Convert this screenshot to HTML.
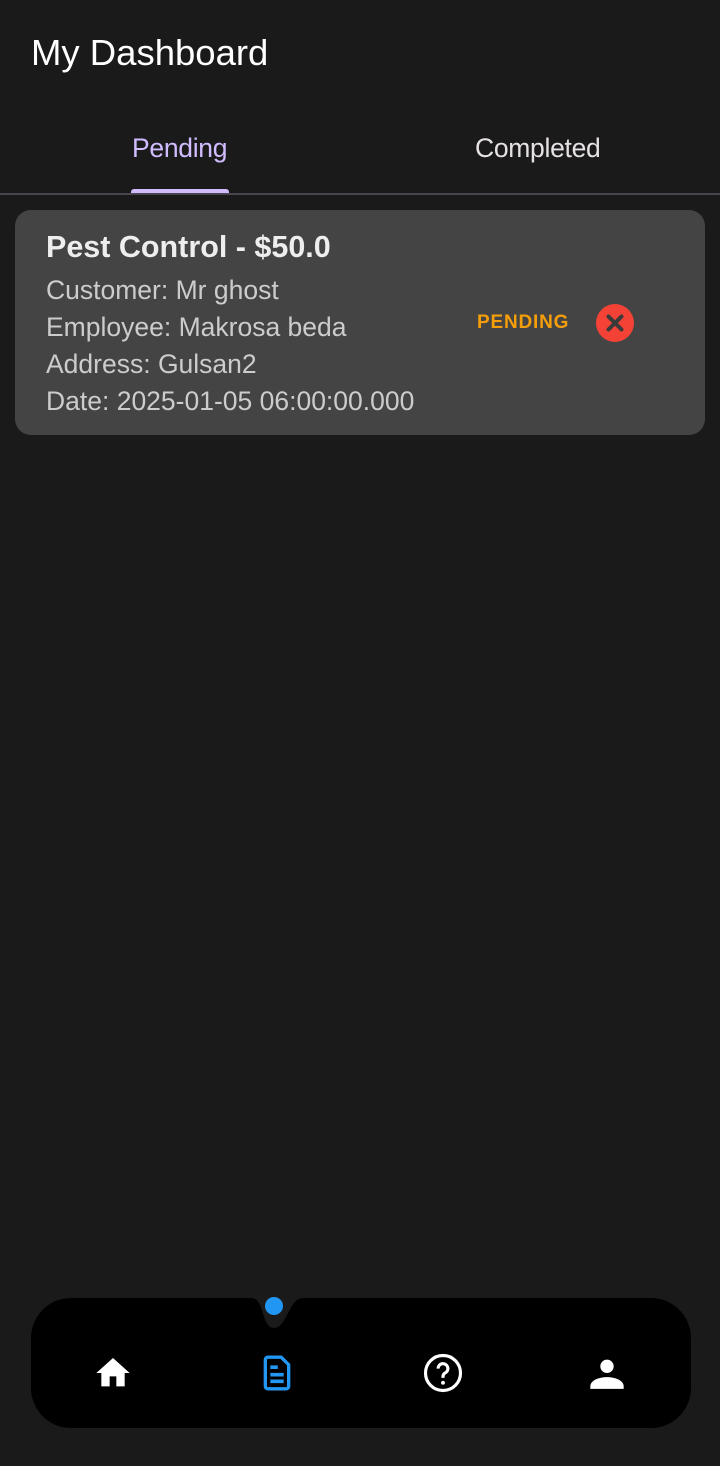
<!DOCTYPE html>
<html><head><meta charset="utf-8"><style>
html,body{margin:0;padding:0;}
body{width:720px;height:1466px;background:#1a1a1a;font-family:"Liberation Sans",sans-serif;position:relative;overflow:hidden;color:#fff;}
.t{position:absolute;white-space:nowrap;}
</style></head><body>
<div class="t" style="left:31px;top:32px;font-size:36.5px;color:#fff;">My Dashboard</div>
<div class="t" style="left:132px;top:133px;font-size:26.5px;color:#d0bcff;letter-spacing:-0.3px;">Pending</div>
<div class="t" style="left:475px;top:133px;font-size:26.5px;color:#e6e1e5;letter-spacing:-0.3px;">Completed</div>
<div style="position:absolute;left:131px;top:189px;width:98px;height:6px;background:#d0bcff;border-radius:3px 3px 0 0;"></div>
<div style="position:absolute;left:0;top:193px;width:720px;height:2px;background:#49454f;"></div>
<div style="position:absolute;left:15px;top:210px;width:690px;height:225px;background:#444444;border-radius:16px;"></div>
<div class="t" style="left:46px;top:230px;font-size:30.5px;font-weight:bold;color:#eee;">Pest Control - $50.0</div>
<div class="t" style="left:46px;top:272px;font-size:26.5px;color:#ccc;line-height:37px;">Customer: Mr ghost<br>Employee: Makrosa beda<br>Address: Gulsan2<br>Date: 2025-01-05 06:00:00.000</div>
<div class="t" style="left:477px;top:312px;font-size:19px;font-weight:bold;color:#f59e0b;letter-spacing:0.8px;">PENDING</div>
<svg style="position:absolute;left:596px;top:304px" width="38" height="38" viewBox="0 0 38 38"><circle cx="19" cy="19" r="19" fill="#f44336"/><path d="M12.5 12.5L25.5 25.5M25.5 12.5L12.5 25.5" stroke="#3a3a3a" stroke-width="4" stroke-linecap="round"/></svg>
<svg style="position:absolute;left:31px;top:1290px" width="660" height="140" viewBox="0 0 660 140">
<path d="M40 8 H220 C234 8 230 38 243 38 C256 38 258 8 272 8 H620 A40 40 0 0 1 660 48 V98 A40 40 0 0 1 620 138 H40 A40 40 0 0 1 0 98 V48 A40 40 0 0 1 40 8Z" fill="#000"/>
<circle cx="243" cy="16" r="9" fill="#2196f3"/>
</svg>
<svg style="position:absolute;left:92px;top:1353px" width="42" height="40" viewBox="0 0 24 24"><path d="M10 20v-6h4v6h5v-8h3L12 3 2 12h3v8z" fill="#fff"/></svg>
<svg style="position:absolute;left:257px;top:1353px" width="40" height="40" viewBox="0 0 24 24"><path d="M6.5 2.5h8l4.5 4.5V20a1.5 1.5 0 0 1-1.5 1.5h-11A1.5 1.5 0 0 1 5 20V4a1.5 1.5 0 0 1 1.5-1.5z" fill="none" stroke="#2196f3" stroke-width="2" stroke-linejoin="round"/><path d="M8 8.5h4.5M8 13h8M8 17h8" stroke="#2196f3" stroke-width="2.2"/></svg>
<svg style="position:absolute;left:422px;top:1352px" width="42" height="42" viewBox="0 0 24 24"><circle cx="12" cy="12" r="10" fill="none" stroke="#fff" stroke-width="1.8"/><path d="M9.2 9.5a2.8 2.8 0 1 1 4 2.5c-.9.5-1.2 1-1.2 2v.8" fill="none" stroke="#fff" stroke-width="1.8"/><circle cx="12" cy="17.6" r="1.1" fill="#fff"/></svg>
<svg style="position:absolute;left:587px;top:1353px" width="40" height="40" viewBox="0 0 24 24"><circle cx="12" cy="8" r="4" fill="#fff"/><path d="M2 20c0-3.5 5-5.5 10-5.5s10 2 10 5.5v1.5H2z" fill="#fff"/></svg>
</body></html>
